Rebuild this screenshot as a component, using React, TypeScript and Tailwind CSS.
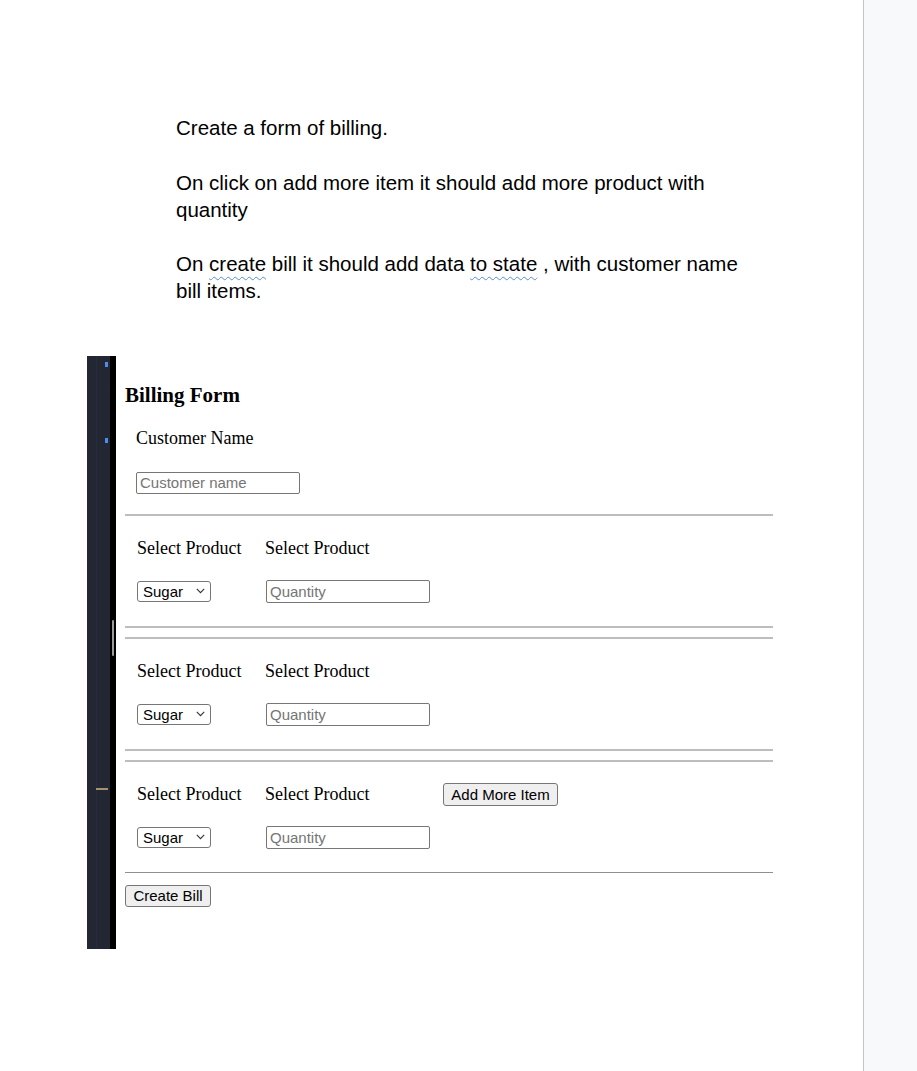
import React from 'react';

const serif = { fontFamily: '"Liberation Serif", "Times New Roman", serif' };

function Rule({ dark }: { dark?: boolean }) {
  return <div className={dark ? 'h-px bg-[#8f8f8f]' : 'h-[2px] bg-[#bdbdbd]'} />;
}

function SugarSelect() {
  return (
    <div className="relative w-[74px] h-[21px]">
      <select
        defaultValue="sugar"
        className="appearance-none w-full h-full border border-[#767676] rounded-[3px] bg-white pl-[5px] text-[15px] leading-[19px] text-black font-['Liberation_Sans',Arial,sans-serif] outline-none"
      >
        <option value="sugar">Sugar</option>
        <option value="salt">Salt</option>
        <option value="rice">Rice</option>
      </select>
      <svg className="absolute right-[6px] top-[8px] pointer-events-none" width="9" height="6" viewBox="0 0 9 6" fill="none">
        <path d="M0.8 0.8 L4.5 4.6 L8.2 0.8" stroke="#333" strokeWidth="1.1" />
      </svg>
    </div>
  );
}

function TextBox({ placeholder, h = 'h-[23px]' }: { placeholder: string; h?: string }) {
  return (
    <input
      placeholder={placeholder}
      className={`w-[164px] ${h} border border-[#767676] rounded-[2px] px-[3px] text-[15px] text-black placeholder:text-[#757575] font-['Liberation_Sans',Arial,sans-serif] outline-none`}
    />
  );
}

function Btn({ children, w, h }: { children: React.ReactNode; w: string; h: string }) {
  return (
    <button className={`${w} ${h} border border-[#767676] rounded-[3px] bg-[#efefef] text-[15px] leading-none text-black font-['Liberation_Sans',Arial,sans-serif]`}>
      {children}
    </button>
  );
}

function ItemRow({ last }: { last?: boolean }) {
  return (
    <div className="pl-[12px] pt-[19px] pb-[23px]">
      <div className="grid grid-cols-[128px_178px_auto] items-center h-[22px] text-[18px] text-black" style={serif}>
        <span>Select Product</span>
        <span>Select Product</span>
        {last ? (
          <Btn w="w-[115px]" h="h-[23px]">Add More Item</Btn>
        ) : (
          <span />
        )}
      </div>
      <div className="grid grid-cols-[129px_auto] items-start mt-[23px] h-[23px]">
        <SugarSelect />
        <TextBox placeholder="Quantity" />
      </div>
    </div>
  );
}

export default function App() {
  return (
    <div className="flex h-[1071px] w-full bg-white overflow-hidden">
      <div className="w-[863px] shrink-0">
        <div
          className="ml-[176px] mt-[114px] w-[580px] text-[20.5px] leading-[27px] text-black"
          style={{ fontFamily: '"Liberation Sans", Arial, sans-serif' }}
        >
          <p className="mb-[28px]">Create a form of billing.</p>
          <p className="mb-[27px]">On click on add more item it should add more product with quantity</p>
          <p>
            On{' '}
            <span className="underline decoration-wavy decoration-[#5b8ad8] decoration-1 underline-offset-[5px]">create</span>{' '}
            bill it should add data{' '}
            <span className="underline decoration-wavy decoration-[#5b8ad8] decoration-1 underline-offset-[5px]">to state</span>{' '}
            , with customer name bill items.
          </p>
        </div>

        <div className="ml-[87px] mt-[52px] flex h-[593px]">
          {/* editor gutter */}
          <div className="relative w-[23px] bg-[#232733]">
            <div className="absolute left-[9px] top-0 bottom-0 w-px bg-[#282c38]" />
            <div className="absolute left-[18px] top-[6px] w-[3px] h-[5px] bg-[#4c8ef0]" />
            <div className="absolute left-[18px] top-[82px] w-[3px] h-[5px] bg-[#4c8ef0]" />
            <div className="absolute left-[9px] top-[432px] w-[12px] h-[2px] bg-[#a8926e]" />
          </div>
          <div className="relative w-[6px] bg-black">
            <div className="absolute left-[2px] top-[264px] w-[2px] h-[36px] rounded-full bg-[#9a9a9a]" />
          </div>

          {/* form */}
          <div className="w-[657px] pl-[9px]" style={serif}>
            <h3 className="mt-[27px] h-[24px] text-[21px] leading-[24px] font-bold text-black">Billing Form</h3>
            <div className="pl-[11px]">
              <div className="mt-[20px] h-[22px] text-[18px] leading-[22px] text-black">Customer Name</div>
              <div className="mt-[22px]">
                <TextBox placeholder="Customer name" h="h-[22px]" />
              </div>
            </div>
            <div className="mt-[19px]">
              <Rule />
            </div>
            <ItemRow />
            <Rule />
            <div className="h-[9px]" />
            <Rule />
            <ItemRow />
            <Rule />
            <div className="h-[9px]" />
            <Rule />
            <ItemRow last />
            <Rule dark />
            <div className="mt-[11px]">
              <Btn w="w-[86px]" h="h-[22px]">Create Bill</Btn>
            </div>
          </div>
        </div>
      </div>
      <div className="flex-1 border-l border-[#c4c4c4] bg-[#f8f9fb]" />
    </div>
  );
}
